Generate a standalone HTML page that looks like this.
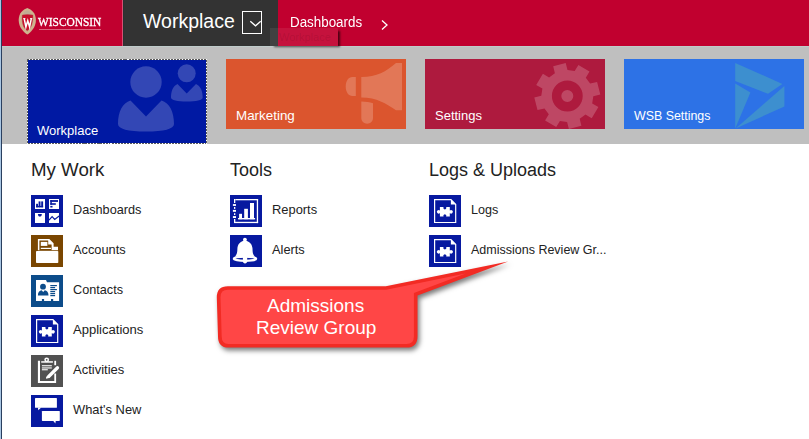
<!DOCTYPE html>
<html><head><meta charset="utf-8">
<style>
html,body{margin:0;padding:0;}
body{width:809px;height:439px;overflow:hidden;position:relative;background:#fff;font-family:"Liberation Sans",sans-serif;}
.a{position:absolute;}
.t{position:absolute;white-space:nowrap;}
svg{position:absolute;display:block;}
#lb0{left:0;top:0;width:1px;height:439px;background:#a9c6e3;}
#lb1{left:1px;top:0;width:1px;height:439px;background:#2a3f5f;}
#hdr{left:2px;top:0;width:807px;height:46px;background:#c1002f;}
#dark{left:123px;top:0;width:155px;height:46px;background:#333333;}
#band{left:2px;top:46px;width:807px;height:98px;background:#bfbfbf;}
.tile{position:absolute;top:59px;width:180px;height:70px;overflow:hidden;}
.tl{position:absolute;color:#fff;font-size:13px;line-height:13px;white-space:nowrap;}
.h2{font-size:18px;line-height:18px;color:#222;}
.it{font-size:12.5px;line-height:13px;color:#222;}
</style></head><body>
<div class="a" id="lb0"></div><div class="a" id="lb1"></div>
<div class="a" id="hdr"></div>
<div class="a" id="dark"></div>
<div class="a" style="left:122px;top:0;width:1px;height:46px;background:#d65274;"></div>
<div class="a" style="left:123px;top:0;width:1px;height:46px;background:#2b3131;"></div>
<div class="a" id="band"></div>
<div class="a" style="left:2px;top:46px;width:807px;height:1px;background:#bfcbca;"></div>

<!-- logo -->
<svg style="left:14px;top:4px" width="50" height="36" viewBox="14 4 50 36">
<path d="M27.3 7.9 C31.6 9.4 35.9 13 35.9 20 C35.9 27.5 30.6 32.6 27.3 34.5 C24 32.6 18.7 27.5 18.7 20 C18.7 13 23 9.4 27.3 7.9 Z" fill="#cfb38f"/>
<path d="M23.3 14.6 C23.6 12.4 25.3 11 27.3 10.6 C29.3 11 31 12.4 31.3 14.6 Z" fill="#bfae95"/>
<path d="M22.3 15.1 Q27.3 14.1 32.9 15.1 C33 22 31.6 28.2 27.3 30.8 C23 28.2 21.6 22 22.3 15.1 Z" fill="#c90f2b" stroke="#a8313c" stroke-width="0.4"/>
<polyline points="24.2,18.6 25.9,27 27.75,20.6 29.6,27 31.3,18.6" fill="none" stroke="#fff" stroke-width="1.5" stroke-linejoin="miter" stroke-miterlimit="10"/>
<path d="M23.2 18.5 H25.4 M30.1 18.5 H32.3" stroke="#fff" stroke-width="0.9"/>
</svg>
<div class="t" style="left:37.8px;top:15.7px;font-family:'Liberation Serif',serif;font-size:12.8px;line-height:12.8px;color:#fff;transform:scaleX(0.89);transform-origin:0 0;-webkit-text-stroke:0.35px #fff;">WISCONSIN</div>
<div class="a" style="left:38.5px;top:28.5px;width:62.5px;height:1.5px;background:rgba(255,220,225,0.45);"></div>

<!-- header text -->
<div class="t" style="left:143px;top:12.3px;font-size:19.5px;line-height:19.5px;color:#fff;">Workplace</div>
<div class="a" style="left:242px;top:11px;width:18px;height:21px;border:1px solid #fff;"></div>
<svg style="left:242px;top:11px" width="20" height="23" viewBox="0 0 20 23"><path d="M8.3 10.3 L13.5 14.8 L18.7 10.3" fill="none" stroke="#fff" stroke-width="1.3"/></svg>
<div class="t" style="left:290px;top:14.7px;font-size:14px;line-height:14px;color:#fff;transform:scaleX(0.955);transform-origin:0 0;">Dashboards</div>
<svg style="left:380px;top:18.5px" width="10" height="12" viewBox="0 0 10 12"><path d="M2 1.5 L7 6 L2 10.5" fill="none" stroke="#fff" stroke-width="1.3"/></svg>

<!-- tooltip -->
<div class="a" style="left:270px;top:28px;width:68px;height:18px;background:rgba(255,255,255,0.07);box-shadow:3px 2px 2px -1px rgba(0,0,0,0.6);"></div>
<div class="t" style="left:279px;top:32px;font-size:11px;line-height:11px;color:rgba(60,0,10,0.13);">Workplace</div>

<!-- tiles -->
<div class="tile" style="left:28px;width:178px;height:83px;top:60px;background:#0019a3;"></div>
<svg style="left:0;top:0" width="260" height="150" viewBox="0 0 260 150" shape-rendering="crispEdges"><rect x="27.5" y="59.5" width="179" height="84" fill="none" stroke="#5a5a5a" stroke-width="1"/><rect x="27.5" y="59.5" width="179" height="84" fill="none" stroke="#fff" stroke-width="1" stroke-dasharray="1 2" stroke-dashoffset="2"/></svg>
<div class="tile" style="left:226px;background:#db552e;"></div>
<div class="tile" style="left:425px;background:#ae1a3e;"></div>
<div class="tile" style="left:624px;background:#2d72e6;"></div>
<svg style="left:0;top:0" width="809" height="145" viewBox="0 0 809 145">
<g fill="#fff" fill-opacity="0.2">
<circle cx="146" cy="82" r="15.7"/>
<path d="M130.5 100.6 L146 116.5 L161.5 100.6 C169.5 103 174 112 174 124 C174 129 164 131.5 146 131.5 C128 131.5 118 129 118 124 C118 112 122.5 103 130.5 100.6 Z"/>
<circle cx="186.7" cy="73.3" r="9"/>
<path d="M177.5 84 L186.7 93.5 L196 84 C200.5 86 202.7 91 202.7 97.5 C202.7 100.3 196 101.5 186.7 101.5 C177.5 101.5 171 100.3 171 97.5 C171 91 173 86 177.5 84 Z"/>
<path d="M355.8 77 H352.5 C348.3 77 345.7 81.2 345.7 86.5 C345.7 91.8 348.3 96 352.5 96 H355.8 Z"/>
<path d="M361.3 77 C377 77 386 71.5 396 63 H402 V110.2 H396 C386 103.5 377 97.4 361.3 97.4 Z"/>
<path d="M361.3 101.5 C366 101.6 369.5 102.3 373 103.3 V118 C373 121.2 370.4 123.7 367.15 123.7 C363.9 123.7 361.3 121.2 361.3 118 Z"/>
<path fill-rule="evenodd" d="M554.9 73.2 L553.2 66.2 L565.7 63.0 L567.5 70.0 L574.7 71.1 L578.4 64.9 L589.5 71.6 L585.8 77.8 L590.1 83.6 L597.1 81.9 L600.3 94.4 L593.3 96.2 L592.2 103.4 L598.4 107.1 L591.7 118.2 L585.5 114.5 L579.7 118.8 L581.4 125.8 L568.9 129.0 L567.1 122.0 L559.9 120.9 L556.2 127.1 L545.1 120.4 L548.8 114.2 L544.5 108.4 L537.5 110.1 L534.3 97.6 L541.3 95.8 L542.4 88.6 L536.2 84.9 L542.9 73.8 L549.1 77.5 Z M582.7 96.0 A15.4 15.4 0 1 0 551.9 96.0 A15.4 15.4 0 1 0 582.7 96.0 Z M573.3 96.0 A6.0 6.0 0 1 0 561.3 96.0 A6.0 6.0 0 1 0 573.3 96.0 Z"/>
</g>
<rect x="425" y="129" width="180" height="14" fill="#bfbfbf"/>
<g fill="#3d8fcf">
<path d="M735.2 62.9 L782.4 83.9 L768 93.8 L735.2 81 Z"/>
<path d="M735.2 83.4 L750.4 92.5 L735.2 128.6 Z"/>
<path d="M784.4 85.9 L784.4 106.4 L735.7 128.6 Z"/>
</g>
</svg>
<div class="tl" style="left:37px;top:124px;">Workplace</div>
<div class="tl" style="left:236px;top:109.2px;font-size:13.4px;">Marketing</div>
<div class="tl" style="left:435px;top:109.3px;">Settings</div>
<div class="tl" style="left:634px;top:110.2px;font-size:12.4px;">WSB Settings</div>

<!-- section headers -->
<div class="t h2" style="left:31px;top:161px;font-size:18.7px;">My Work</div>
<div class="t h2" style="left:230px;top:161.3px;">Tools</div>
<div class="t h2" style="left:429px;top:161.3px;">Logs &amp; Uploads</div>

<!-- items -->
<div class="t it" style="left:73px;top:204.30px;font-size:12.7px;">Dashboards</div>
<div class="t it" style="left:73px;top:243.26px;font-size:12.8px;">Accounts</div>
<div class="t it" style="left:73px;top:284.30px;font-size:12.7px;">Contacts</div>
<div class="t it" style="left:73px;top:323.18px;font-size:13.05px;">Applications</div>
<div class="t it" style="left:73px;top:363.20px;font-size:13px;">Activities</div>
<div class="t it" style="left:73px;top:403.23px;font-size:12.9px;">What's New</div>
<div class="t it" style="left:272px;top:203.23px;font-size:12.9px;">Reports</div>
<div class="t it" style="left:272px;top:243.26px;font-size:12.8px;">Alerts</div>
<div class="t it" style="left:471px;top:204.33px;font-size:12.6px;">Logs</div>
<div class="t it" style="left:471px;top:244.37px;font-size:12.5px;">Admissions Review Gr...</div>

<!-- icons -->
<svg style="left:31px;top:195px" width="32" height="32" viewBox="0 0 32 32"><rect width="32" height="32" fill="#0719a0"/><g fill="#fff"><rect x="4" y="4" width="10" height="10"/><rect x="18" y="4" width="10" height="10"/><rect x="4" y="18" width="10" height="10"/><rect x="18" y="18" width="10" height="10"/></g><g fill="#0719a0"><rect x="5.1" y="8.8" width="1.9" height="3.5"/><rect x="7.6" y="6.4" width="1.9" height="5.9"/><rect x="10.2" y="6.4" width="1.9" height="5.9"/><rect x="5.1" y="10.9" width="7" height="1.4"/><rect x="19.3" y="5.1" width="7.7" height="1.8"/><rect x="19.3" y="8.2" width="5.5" height="1.6"/><rect x="19.3" y="5.1" width="1.5" height="4.7"/><rect x="19.3" y="10.9" width="2.2" height="1.6"/><path d="M6.9 19.1 H10.9 Q10.9 21.7 8.9 21.7 Q6.9 21.7 6.9 19.1 Z"/></g><path d="M18 25.1 L21.1 21.7 L23.7 24.4 L28.1 21.1" fill="none" stroke="#0719a0" stroke-width="1.2"/></svg>
<svg style="left:31px;top:235px" width="32" height="32" viewBox="0 0 32 32"><rect width="32" height="32" fill="#7a4600"/><path d="M6.9 15.3 V4 H18.3 L22.6 8.3 V11.7 H27 V15.3 Z" fill="#fff"/><path d="M8.4 15.3 V5.5 H17.2 V9.4 H20.6 V15.3 Z" fill="#7a4600"/><rect x="9.8" y="6.9" width="6.6" height="4" fill="#fff"/><rect x="9.8" y="12.8" width="10.2" height="1.2" fill="#fff"/><rect x="5" y="16" width="22.3" height="12.1" rx="0.8" fill="#fff"/></svg>
<svg style="left:31px;top:275px" width="32" height="32" viewBox="0 0 32 32"><rect width="32" height="32" fill="#0c4c8a"/><path d="M5 5 H15 L16 7.3 H28.1 V25.9 H22.2 V23.9 H20 V25.9 H13.1 V23.9 H10.9 V25.9 H5 Z" fill="#fff"/><circle cx="12" cy="11.7" r="2.9" fill="#0c4c8a"/><path d="M6.9 20.4 C6.9 17 8.5 15.4 10.6 15.2 L12.2 17 L13.8 15.2 C15.9 15.4 17.5 17 17.5 20.4 Z" fill="#0c4c8a"/><g fill="#0c4c8a"><rect x="19.3" y="10" width="6.6" height="1.2"/><rect x="19.3" y="12" width="4.8" height="1.2"/><rect x="19.3" y="14" width="6.6" height="1.2"/><rect x="19.3" y="16" width="4.8" height="1.2"/><rect x="19.3" y="18" width="4.8" height="1.2"/><rect x="19.3" y="20" width="4.8" height="1.2"/></g></svg>
<svg style="left:31px;top:315px" width="32" height="32" viewBox="0 0 32 32"><rect width="32" height="32" fill="#0719a0"/><path d="M5.6 4.6 H21.9 L26.7 9.4 V27.5 H5.6 Z" fill="none" stroke="#fff" stroke-width="1.2"/><path d="M21.9 4.3 L27.2 9.6 H21.9 Z" fill="#fff"/><path d="M10.9 12 H14.6 A1.5 1.5 0 1 0 17.1 12 H20.8 V15.5 A1.8 1.8 0 1 1 20.8 18.1 V21.6 H17.1 A1.5 1.5 0 1 0 14.6 21.6 H10.9 V18.1 A1.8 1.8 0 1 1 10.9 15.5 Z" fill="#fff"/></svg>
<svg style="left:31px;top:355px" width="32" height="32" viewBox="0 0 32 32"><rect width="32" height="32" fill="#515151"/><g fill="#fff"><path d="M6.9 5.8 H9 V25.9 H23.3 V18.6 H25.1 V28.1 H6.9 Z"/><path d="M23.3 5.8 H25.1 V10.2 H23.3 Z"/><path d="M10.2 6.2 H21.9 V7.7 H10.2 Z"/><circle cx="15.7" cy="4.8" r="2.4"/><rect x="10.9" y="10.2" width="9.9" height="1.1"/><rect x="10.9" y="12.4" width="9.9" height="1.1"/><rect x="10.9" y="14.2" width="5.9" height="1.1"/></g><circle cx="15.7" cy="4.8" r="0.9" fill="#515151"/><path d="M16.3 20.6 L25.3 11.6 A1.6 1.6 0 0 1 27.6 13.9 L18.6 22.9 L15 23.6 Z" fill="#fff"/><path d="M15.6 21.2 L17.3 23 L15 23.6 Z" fill="#fff"/></svg>
<svg style="left:31px;top:395px" width="32" height="32" viewBox="0 0 32 32"><rect width="32" height="32" fill="#0719a0"/><g fill="#fff"><rect x="4" y="2.9" width="21.9" height="9.9" rx="0.6"/><path d="M6.9 12.5 L7.3 15.3 L10.2 12.5 Z"/><rect x="10.9" y="16" width="17.9" height="9.9" rx="0.6"/><path d="M21.9 25.6 L24.4 28.4 L24.8 25.6 Z"/></g></svg>
<svg style="left:230px;top:195px" width="32" height="32" viewBox="0 0 32 32"><rect width="32" height="32" fill="#0719a0"/><g fill="#fff"><rect x="5.3" y="4" width="22.8" height="1.3"/><rect x="26.8" y="4" width="1.3" height="24.1"/><rect x="4" y="26.8" width="24.1" height="1.3"/><rect x="4" y="4" width="1.3" height="4"/><rect x="4" y="24" width="1.3" height="4"/><rect x="4" y="12" width="1.3" height="1.9"/><rect x="4" y="18.2" width="1.3" height="1.8"/><rect x="2.9" y="9.1" width="3.1" height="1.8"/><rect x="2.9" y="14.9" width="3.1" height="1.9"/><rect x="2.9" y="21.1" width="3.1" height="1.9"/><rect x="9.1" y="18.8" width="2.9" height="5.4"/><rect x="14.2" y="13.8" width="3.7" height="10.4"/><rect x="20" y="8" width="4" height="16.2"/><rect x="8" y="23" width="17.1" height="1.4"/></g></svg>
<svg style="left:230px;top:235px" width="32" height="32" viewBox="0 0 32 32"><rect width="32" height="32" fill="#0719a0"/><g fill="#fff"><circle cx="14.9" cy="4.6" r="1.9"/><path d="M14.9 5.4 C10.4 6 7.5 9.3 7.4 13.6 C7.3 17.6 7 19.6 5 21.4 L24.8 21.4 C22.8 19.6 22.6 17.6 22.5 13.6 C22.4 9.3 19.4 6 14.9 5.4 Z"/></g><ellipse cx="15" cy="23.7" rx="11.2" ry="2.1" fill="#0719a0" stroke="#fff" stroke-width="2.2"/><path d="M12.9 21.6 H17.2 V26.6 C17.2 27.8 16.2 28.4 15 28.4 C13.8 28.4 12.9 27.8 12.9 26.6 Z" fill="#fff"/></svg>
<svg style="left:429px;top:195px" width="32" height="32" viewBox="0 0 32 32"><rect width="32" height="32" fill="#0719a0"/><path d="M5.6 4.6 H21.9 L26.7 9.4 V27.5 H5.6 Z" fill="none" stroke="#fff" stroke-width="1.2"/><path d="M21.9 4.3 L27.2 9.6 H21.9 Z" fill="#fff"/><path d="M10.9 12 H14.6 A1.5 1.5 0 1 0 17.1 12 H20.8 V15.5 A1.8 1.8 0 1 1 20.8 18.1 V21.6 H17.1 A1.5 1.5 0 1 0 14.6 21.6 H10.9 V18.1 A1.8 1.8 0 1 1 10.9 15.5 Z" fill="#fff"/></svg>
<svg style="left:429px;top:235px" width="32" height="32" viewBox="0 0 32 32"><rect width="32" height="32" fill="#0719a0"/><path d="M5.6 4.6 H21.9 L26.7 9.4 V27.5 H5.6 Z" fill="none" stroke="#fff" stroke-width="1.2"/><path d="M21.9 4.3 L27.2 9.6 H21.9 Z" fill="#fff"/><path d="M10.9 12 H14.6 A1.5 1.5 0 1 0 17.1 12 H20.8 V15.5 A1.8 1.8 0 1 1 20.8 18.1 V21.6 H17.1 A1.5 1.5 0 1 0 14.6 21.6 H10.9 V18.1 A1.8 1.8 0 1 1 10.9 15.5 Z" fill="#fff"/></svg>

<!-- callout -->
<svg style="left:205px;top:250px;filter:drop-shadow(2px 3px 2.5px rgba(0,0,0,0.52))" width="320" height="115" viewBox="205 250 320 115">
<path d="M228.5 286.2 H385.8 L508.1 261.5 L417.5 295.4 V336.5 Q417.5 347.6 406.5 347.6 H228.5 Q218 347.6 218 336.5 L216.8 297.2 Q216.8 286.2 227.8 286.2 Z" fill="#f22b24"/>
<path d="M228.5 289.8 H386.2 L465.7 273.6 L413.9 293 V336.5 Q413.9 344 406.5 344 H228.5 Q221.7 344 221.7 336.5 L220.5 297.2 Q220.5 289.8 227.8 289.8 Z" fill="#ff4646"/>
</svg>
<div class="t" style="left:267px;top:295.7px;font-size:19px;line-height:19px;color:#fff;">Admissions</div>
<div class="t" style="left:256px;top:317.5px;font-size:19px;line-height:19px;color:#fff;">Review Group</div>
</body></html>
